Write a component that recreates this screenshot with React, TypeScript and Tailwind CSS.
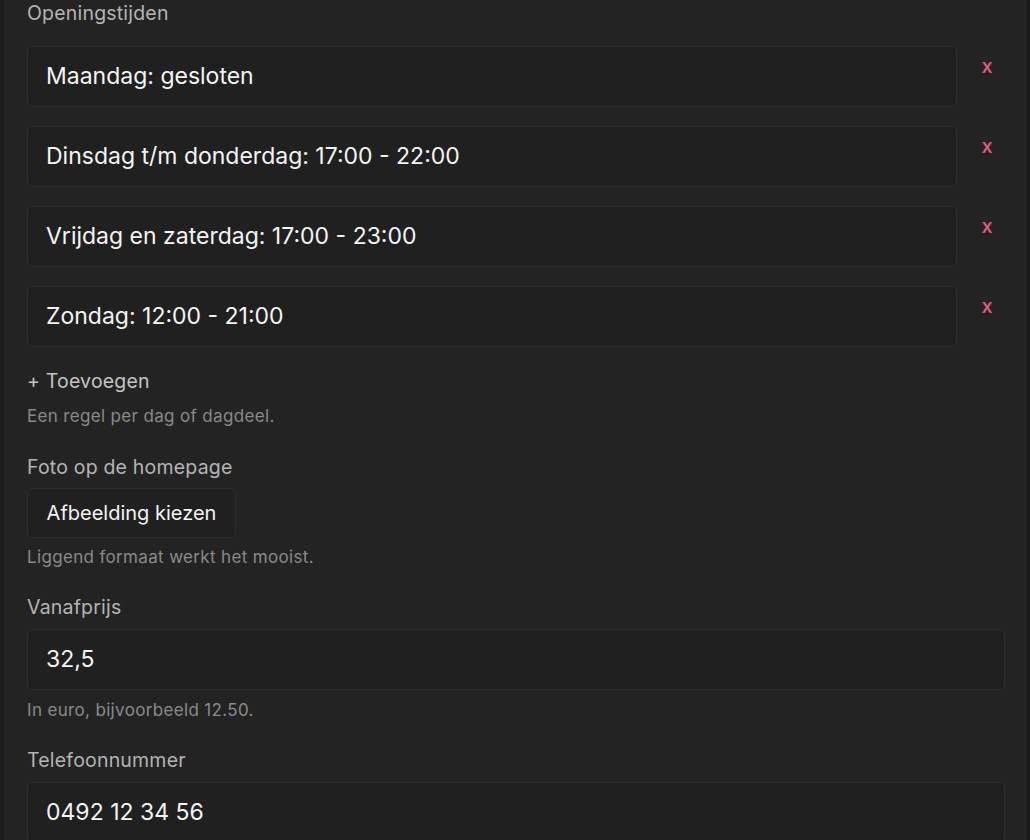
import React from "react";

const hours = [
  "Maandag: gesloten",
  "Dinsdag t/m donderdag: 17:00 - 22:00",
  "Vrijdag en zaterdag: 17:00 - 23:00",
  "Zondag: 12:00 - 21:00",
];

const Label = ({ children, className = "" }: { children: React.ReactNode; className?: string }) => (
  <p className={`text-[19.5px] leading-[26px] tracking-[0.01em] text-[#b4b4b4] ${className}`}>{children}</p>
);

const Hint = ({ children, className = "" }: { children: React.ReactNode; className?: string }) => (
  <p className={`text-[17px] leading-[20px] tracking-[0.02em] text-[#8a8a8a] ${className}`}>{children}</p>
);

const Field = ({ value }: { value: string }) => (
  <div className="h-[61px] rounded-[6px] border border-[#2d2d2d] bg-[#202020] px-[18px] flex items-center text-[23px] text-[#f4f4f4]">
    {value}
  </div>
);

export default function App() {
  return (
    <div
      className="w-[1030px] h-[840px] overflow-hidden bg-[#232324] border-l-[4px] border-r-[3px] border-[#1b1b1b]"
      style={{ fontFamily: "Inter, 'Noto Sans', sans-serif" }}
    >
      <div className="pl-[23px] pr-[22px] flex flex-col">
        {/* Openingstijden */}
        <Label>Openingstijden</Label>
        <div className="mt-[20px] flex flex-col gap-[19px]">
          {hours.map((h) => (
            <div key={h} className="flex gap-3 items-start">
              <div className="flex-1">
                <Field value={h} />
              </div>
              <button className="w-9 mt-[8px] text-[20px] leading-[24px] font-medium text-[#e8587f] text-center">x</button>
            </div>
          ))}
        </div>
        <p className="mt-[21px] text-[19.5px] leading-[26px] tracking-[0.01em] text-[#c4c4c4]">+ Toevoegen</p>
        <Hint className="mt-[12px]">Een regel per dag of dagdeel.</Hint>

        {/* Foto */}
        <Label className="mt-[28px]">Foto op de homepage</Label>
        <div className="mt-[8px]">
          <button className="h-[50px] w-[209px] rounded-[5px] border border-[#2d2d2d] bg-[#202020] text-[20px] text-[#f4f4f4]">
            Afbeelding kiezen
          </button>
        </div>
        <Hint className="mt-[9px]">Liggend formaat werkt het mooist.</Hint>

        {/* Vanafprijs */}
        <Label className="mt-[27px]">Vanafprijs</Label>
        <div className="mt-[9px]">
          <Field value="32,5" />
        </div>
        <Hint className="mt-[10px]">In euro, bijvoorbeeld 12.50.</Hint>

        {/* Telefoon */}
        <Label className="mt-[27px]">Telefoonnummer</Label>
        <div className="mt-[9px]">
          <Field value="0492 12 34 56" />
        </div>
      </div>
    </div>
  );
}
